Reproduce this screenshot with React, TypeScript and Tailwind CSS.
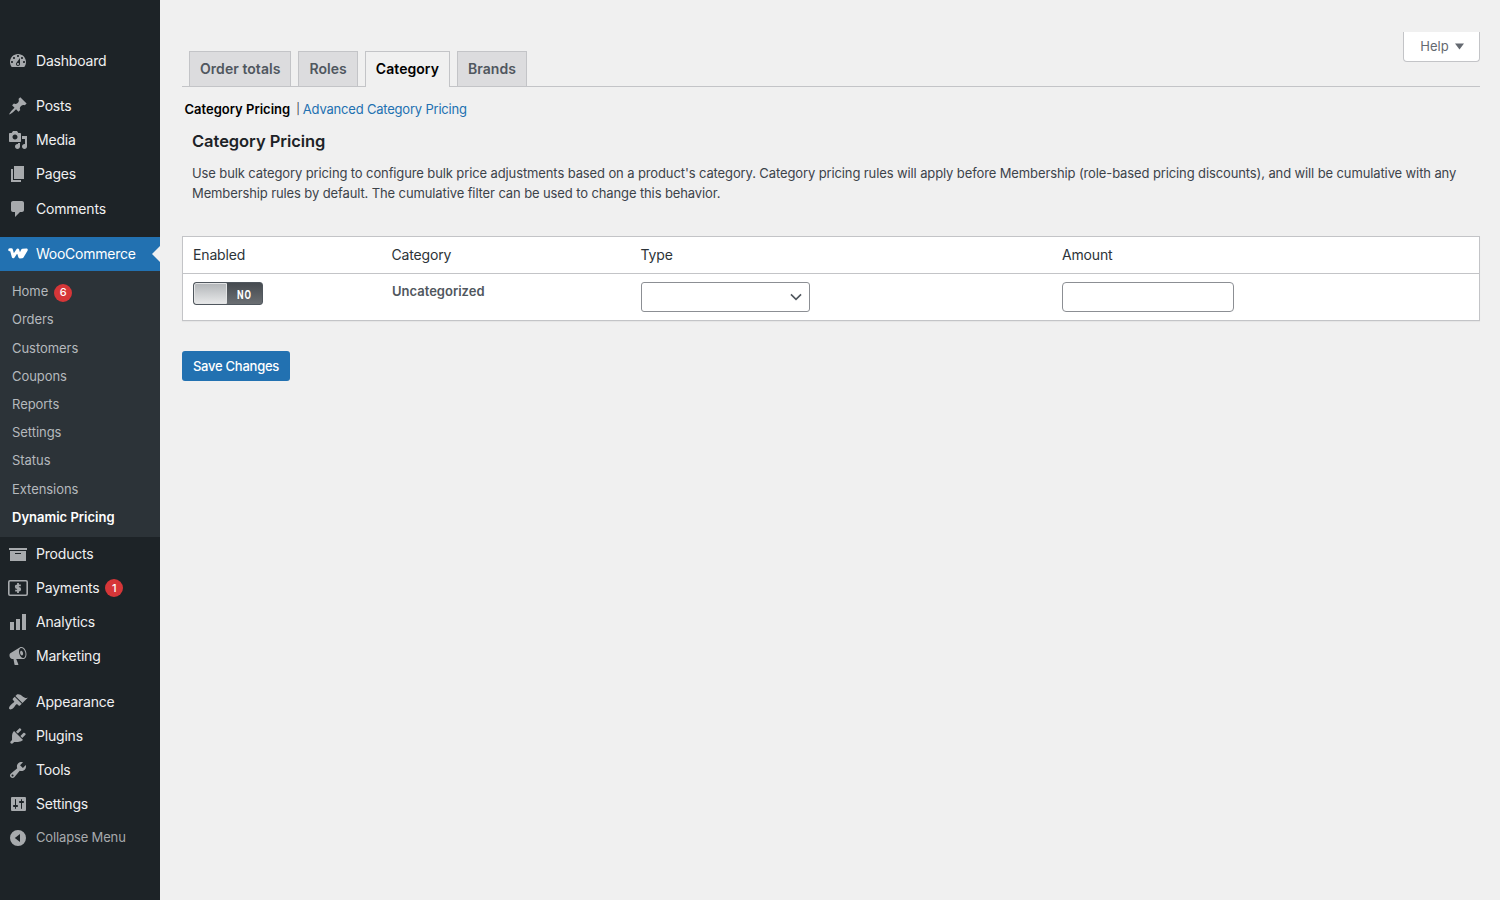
import React from 'react';

interface MenuEntry {
  label: string;
  icon: React.ReactNode;
  badge?: number;
}

const Glyph = ({ d }: { d: string }) => (
  <svg viewBox="0 0 20 20" width={20} height={20} fill="currentColor" fillRule="evenodd">
    <path d={d} />
  </svg>
);

const WooLogo = () => (
  <svg viewBox="0 0 20 20" width={20} height={20} fill="none" stroke="currentColor" strokeLinejoin="round" strokeLinecap="round">
    <path d="M1.7 5.8h1.7l1.9 7 4.4-6.8 2.1 6.9 2.4-.1 4-6.900-3.600.300-2.200 4.500" strokeWidth="3" />
  </svg>
);

const MoneyIcon = () => (
  <svg viewBox="0 0 20 20" width={20} height={20} fill="none" stroke="currentColor">
    <rect x="0.8" y="2.8" width="18.4" height="14.4" rx="1.2" strokeWidth="1.6" />
    <path d="M12.8 7.3H9.3c-2 0-2 2.700 0 2.700h1.400c2 0 2 2.700 0 2.700H7.200M10 5v10" strokeWidth="1.8" />
  </svg>
);

const CollapseIcon = () => (
  <Glyph d="M10 2a8 8 0 1 0 0 16 8 8 0 0 0 0-16zM12 6v8l-5.2-4z" />
);

const contentMenu: MenuEntry[] = [
  { label: 'Posts', icon: <Glyph d="M10.44 3.02l1.82-1.82 6.36 6.35-1.83 1.82c-1.05-.68-2.48-.57-3.41.36l-.75.75c-.92.93-1.04 2.35-.35 3.41l-1.83 1.82-2.41-2.41-2.8 2.79c-.42.42-3.38 2.71-3.8 2.29s1.86-3.39 2.28-3.81l2.79-2.79L4.1 9.36l1.83-1.82c1.05.69 2.48.57 3.4-.36l.75-.75c.93-.92 1.05-2.35.36-3.41z" /> },
  { label: 'Media', icon: <Glyph d="M13 11V4c0-.55-.45-1-1-1h-1.67L9 1H5L3.67 3H2c-.55 0-1 .45-1 1v7c0 .55.45 1 1 1h10c.55 0 1-.45 1-1zM7 4.5c1.38 0 2.5 1.12 2.5 2.5S8.38 9.5 7 9.5 4.5 8.38 4.5 7 5.62 4.5 7 4.5zM14 6h5v10.5c0 1.38-1.12 2.5-2.5 2.5S14 17.88 14 16.5s1.12-2.5 2.5-2.5c.17 0 .34.02.5.05V9h-3V6zm-4 8.05V13h2v3.5c0 1.38-1.12 2.5-2.5 2.5S7 17.88 7 16.5 8.12 14 9.5 14c.17 0 .34.02.5.05z" /> },
  { label: 'Pages', icon: <Glyph d="M6 15V2h10v13H6zm-1 1h8v2H3V5h2v11z" /> },
  { label: 'Comments', icon: <Glyph d="M5 2h9c1.1 0 2 .9 2 2v7c0 1.1-.9 2-2 2h-2l-5 5v-5H5c-1.1 0-2-.9-2-2V4c0-1.1.9-2 2-2z" /> },
];

const storeMenu: MenuEntry[] = [
  { label: 'Products', icon: <Glyph d="M19 4v2H1V4h18zM2 7h16v10H2V7zm11 3V9H7v1h6z" /> },
  { label: 'Payments', icon: <MoneyIcon />, badge: 1 },
  { label: 'Analytics', icon: <Glyph d="M18 18V2h-4v16h4zm-6 0V7H8v11h4zm-6 0v-8H2v8h4z" /> },
  { label: 'Marketing', icon: <Glyph d="M18.15 5.94c.46 1.62.38 3.22-.02 4.48-.42 1.28-1.26 2.18-2.3 2.48-.16.06-.26.06-.4.06-.06.02-.12.02-.18.02-.06.02-.14.02-.22.02h-6.8l2.22 5.5c.02.14-.06.26-.14.34-.08.1-.24.16-.34.16H6.95c-.1 0-.26-.06-.34-.16-.08-.08-.16-.2-.14-.34l-1-5.5H4.25l-.02-.02c-.5.06-1.08-.18-1.54-.62s-.88-1.08-1.06-1.88c-.24-.8-.2-1.56-.02-2.2.18-.62.58-1.08 1.06-1.3l.02-.02 9-5.4c.1-.06.18-.1.24-.16.06-.04.14-.08.24-.12.16-.08.28-.12.5-.18 1.04-.3 2.24.1 3.22.98s1.84 2.24 2.26 3.86zm-2.58 5.98h-.02c.4-.1.74-.34 1.04-.7.58-.7.86-1.76.86-3.04 0-.64-.1-1.3-.28-1.98-.34-1.36-1.02-2.5-1.78-3.24s-1.68-1.1-2.46-.88c-.82.22-1.4.96-1.7 2-.32 1.04-.28 2.36.06 3.72.38 1.36 1 2.5 1.8 3.24.78.74 1.62 1.1 2.48.88zm-2.54-7.08c.22-.04.42-.02.62.04.38.16.76.48 1.02 1s.42 1.2.42 1.78c0 .3-.04.56-.12.8-.18.48-.44.84-.86.94-.34.1-.8-.06-1.14-.4s-.64-.86-.78-1.5c-.18-.62-.12-1.24.02-1.72s.48-.84.82-.94z" /> },
];

const adminMenu: MenuEntry[] = [
  { label: 'Appearance', icon: <Glyph d="M14.48 11.06L7.41 3.99l1.5-1.5c.5-.56 2.3-.47 3.51.32 1.21.8 1.43 1.28 2.91 2.1 1.18.64 2.45 1.26 4.45.85zm-.71.71L6.7 4.7 4.93 6.47c-.39.39-.39 1.02 0 1.41l1.06 1.06c.39.39.39 1.03 0 1.42-.6.6-1.43 1.11-2.21 1.69-.35.26-.7.53-1.01.84C1.43 14.23.4 16.08 1.4 17.07c.99 1 2.84-.03 4.18-1.36.31-.31.58-.66.85-1.02.57-.78 1.08-1.61 1.69-2.21.39-.39 1.02-.39 1.41 0l1.06 1.06c.39.39 1.02.39 1.41 0z" /> },
  { label: 'Plugins', icon: <Glyph d="M13.11 4.36L9.87 7.6 8 5.73l3.24-3.24c.35-.34 1.05-.2 1.56.32.52.51.66 1.21.31 1.55zm-8 1.77l.91-1.12 9.01 9.01-1.19.84c-.71.71-2.63 1.16-3.82 1.16H6.14L4.9 17.26c-.59.59-1.54.59-2.12 0-.59-.58-.59-1.53 0-2.12l1.24-1.24v-3.88c0-1.13.4-3.19 1.09-3.89zm7.26 3.97l3.24-3.24c.34-.35 1.04-.21 1.55.31.52.51.66 1.21.31 1.55l-3.24 3.25z" /> },
  { label: 'Tools', icon: <Glyph d="M16.68 9.77c-1.34 1.34-3.3 1.67-4.95.99l-5.41 6.52c-.99.99-2.59.99-3.58 0s-.99-2.59 0-3.57l6.52-5.42c-.68-1.65-.35-3.61.99-4.95 1.28-1.28 3.12-1.62 4.72-1.06l-2.89 2.89 2.82 2.82 2.86-2.87c.53 1.58.18 3.39-1.08 4.65zM3.81 16.21c.4.39 1.04.39 1.43 0 .4-.4.4-1.04 0-1.43-.39-.4-1.03-.4-1.43 0-.39.39-.39 1.03 0 1.43z" /> },
  { label: 'Settings', icon: <Glyph d="M18 15.5v-11c0-1.1-.4-1.5-1.5-1.5h-12C3.4 3 3 3.4 3 4.500v11c0 1.1.4 1.5 1.5 1.5h12c1.1 0 1.5-.4 1.5-1.5zM8 11h1c.55 0 1 .45 1 1s-.45 1-1 1H8v1.5c0 .28-.22.5-.5.5s-.5-.22-.5-.5V13H6c-.55 0-1-.45-1-1s.45-1 1-1h1V5.5c0-.28.22-.5.5-.5s.5.22.5.5V11zm5-2h-1c-.55 0-1-.45-1-1s.45-1 1-1h1V5.5c0-.28.22-.5.5-.5s.5.22.5.5V7h1c.55 0 1 .45 1 1s-.45 1-1 1h-1v5.5c0 .28-.22.5-.5.5s-.5-.22-.5-.5V9z" /> },
];

const wooSubmenu = ['Orders', 'Customers', 'Coupons', 'Reports', 'Settings', 'Status', 'Extensions'];

const tabs = ['Order totals', 'Roles', 'Category', 'Brands'];

const Badge = ({ count }: { count: number }) => (
  <span className="mt-px ml-1.5 flex h-[18px] w-[18px] items-center justify-center rounded-full bg-[#d63638] text-[11px] font-medium tracking-normal text-white">
    {count}
  </span>
);

const MenuItem = ({ label, icon, badge }: MenuEntry) => (
  <>
    <span className="mr-2 text-[#a7aaad]">{icon}</span>
    <span className="mb-px leading-[21px]">{label}</span>
    {badge && <Badge count={badge} />}
  </>
);

const MenuGroup = ({ items, loose }: { items: MenuEntry[]; loose?: boolean }) => (
  <ul className="text-[14px] tracking-[-0.2px] text-[#f0f0f1]">
    {items.map((item) => (
      <li key={item.label} className={`flex items-center px-2 ${loose ? 'h-[34.2px]' : 'h-[34px]'}`}>
        <MenuItem {...item} />
      </li>
    ))}
  </ul>
);

const Sidebar = () => (
  <nav className="w-40 shrink-0 bg-[#1d2327] pt-11">
    <MenuGroup
      items={[
        { label: 'Dashboard', icon: <Glyph d="M3.76 16h12.48c1.1-1.37 1.76-3.11 1.76-5 0-4.42-3.58-8-8-8s-8 3.58-8 8c0 1.89.66 3.63 1.76 5zM10 4c.55 0 1 .45 1 1s-.45 1-1 1-1-.45-1-1 .45-1 1-1zM6 6c.55 0 1 .45 1 1s-.45 1-1 1-1-.45-1-1 .45-1 1-1zm8 0c.55 0 1 .45 1 1s-.45 1-1 1-1-.45-1-1 .45-1 1-1zm-5.37 5.55L12 7v6c0 1.1-.9 2-2 2s-2-.9-2-2c0-.57.24-1.08.63-1.45zM4 10c.55 0 1 .45 1 1s-.45 1-1 1-1-.45-1-1 .45-1 1-1zm12 0c.55 0 1 .45 1 1s-.45 1-1 1-1-.45-1-1 .45-1 1-1zm-5 3c0-.55-.45-1-1-1s-1 .45-1 1 .45 1 1 1 1-.45 1-1z" /> },
      ]}
    />
    <div className="h-[11px]" />
    <MenuGroup items={contentMenu} loose />
    <div className="h-[11.2px]" />

    {/* WooCommerce */}
    <div className="relative flex h-[34px] items-center bg-[#2271b1] px-2 text-[14px] tracking-[-0.25px] text-white">
      <span className="mr-2">
        <WooLogo />
      </span>
      <span className="mb-px leading-[21px]">WooCommerce</span>
      <span className="absolute top-1/2 right-0 -translate-y-1/2 border-y-8 border-r-8 border-y-transparent border-r-[#f0f0f0]" />
    </div>
    <ul className="h-[266px] bg-[#2c3338] px-3 pt-[7px] text-[13px] tracking-[-0.05px] text-[#b5b9bd]">
      <li className="flex h-[28.2px] items-center">
        Home
        <Badge count={6} />
      </li>
      {wooSubmenu.map((label) => (
        <li key={label} className="flex h-[28.2px] items-center">
          {label}
        </li>
      ))}
      <li className="flex h-[28.2px] items-center font-semibold tracking-normal text-white">Dynamic Pricing</li>
    </ul>

    <MenuGroup items={storeMenu} />
    <div className="h-3" />
    <MenuGroup items={adminMenu} />
    <button className="flex h-[34px] items-center px-2 text-[13px] tracking-[-0.15px] text-[#a7aaad]">
      <span className="mr-2">
        <CollapseIcon />
      </span>
      <span className="mb-px">Collapse Menu</span>
    </button>
  </nav>
);

const Tabs = () => (
  <div className="flex h-[55px] items-end gap-[7px] border-b border-[#c3c4c7] pl-[7px]">
    {tabs.map((tab) => (
      <button
        key={tab}
        className={
          tab === 'Category'
            ? '-mb-px h-9 border border-b-0 border-[#c3c4c7] bg-[#f0f0f0] px-2.5 pb-[3px] text-[14px] font-semibold tracking-[0.05px] text-black'
            : 'h-[35px] border border-b-0 border-[#c3c4c7] bg-[#dcdcde] px-2.5 pb-0.5 text-[14px] font-semibold tracking-[0.05px] text-[#50575e]'
        }
      >
        {tab}
      </button>
    ))}
  </div>
);

const PricingTable = () => (
  <div className="mt-[33px] border border-[#c3c4c7] bg-white shadow-[0_1px_1px_rgba(0,0,0,0.04)]">
    <div className="grid h-[37px] grid-cols-[198.5px_249px_421.500px_1fr] items-center border-b border-[#c3c4c7] pb-px pl-2.5 text-[14px] tracking-[-0.15px] text-[#2c3338]">
      <span>Enabled</span>
      <span>Category</span>
      <span>Type</span>
      <span>Amount</span>
    </div>
    <div className="grid h-[46px] grid-cols-[199px_249px_421px_1fr] items-start pt-2 pl-2.5">
      <button className="flex h-[23px] w-[70px] overflow-hidden rounded-[3px] border border-[#50575e] bg-gradient-to-b from-[#464b50] to-[#6a6e72] text-white">
        <span className="h-full w-[33px] rounded-l-[2px] border border-[#e3e4e5] bg-gradient-to-b from-[#b4b7ba] to-[#e6e7e8]" />
        <span className="flex h-full flex-1 scale-x-[0.78] items-center justify-center pt-[3px] font-['Roboto',sans-serif] text-[12px] font-bold tracking-[1.2px]">
          NO
        </span>
      </button>
      <span className="-mt-px text-[13px] leading-[20px] font-semibold text-[#50575e]">Uncategorized</span>
      <button className="flex h-[30px] w-[169px] items-center justify-end rounded-[3px] border border-[#8c8f94] pr-[5px] text-[#50575e]">
        <svg width="16" height="16" viewBox="0 0 20 20" fill="none" stroke="currentColor" strokeWidth="2">
          <path d="M3.700 6.700l6.300 6.300 6.300-6.300" />
        </svg>
      </button>
      <input className="h-[30px] w-[172px] rounded border border-[#8c8f94] px-2 outline-none" />
    </div>
  </div>
);

const App: React.FC = () => {
  return (
    <div className="flex h-[900px] w-[1500px] overflow-hidden bg-[#f0f0f0] font-['Inter',sans-serif] text-[13px] text-[#3c434a]">
      <Sidebar />
      <main className="min-w-0 flex-1 pr-5 pl-[22px]">
        <div className="flex h-8 justify-end pt-8">
          <button className="z-10 flex h-[30px] w-[77px] shrink-0 items-center justify-center gap-1.5 rounded-b border border-t-0 border-[#c3c4c7] bg-white pl-px text-[13px] text-[#646970]">
            Help
            <svg width="9" height="7" viewBox="0 0 9 7" fill="currentColor">
              <path d="M0 .5h9l-4.5 6z" />
            </svg>
          </button>
        </div>
        <Tabs />

        <div className="mt-3 ml-[2.5px] flex h-5 items-center leading-5">
          <span className="font-semibold text-black">Category Pricing</span>
          <span className="ml-1.5 text-[11px]">|</span>
          <a className="ml-[3px] tracking-[-0.2px] text-[#2271b1]">Advanced Category Pricing</a>
        </div>

        <div className="ml-2.5">
          <h3 className="mt-2.5 text-[16.5px] leading-6 font-semibold tracking-[-0.05px] text-[#1d2327]">Category Pricing</h3>
          <p className="mt-2.5 leading-5 tracking-[-0.115px]">
            Use bulk category pricing to configure bulk price adjustments based on a product's category. Category pricing rules will apply before Membership (role-based pricing discounts), and will be cumulative with any
            Membership rules by default. The cumulative filter can be used to change this behavior.
          </p>
        </div>

        <PricingTable />

        <button className="mt-[30px] h-[30px] w-[108px] rounded-[3px] bg-[#2271b1] pt-0.5 text-[13px] font-medium tracking-[-0.25px] text-white">
          Save Changes
        </button>
      </main>
    </div>
  );
};

export default App;
